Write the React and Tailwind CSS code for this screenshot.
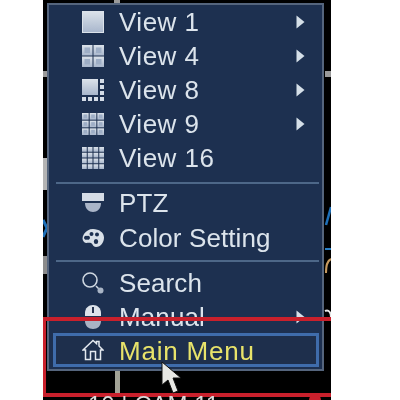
import React from 'react';

const Arrow = () => (
  <svg width="9" height="14" viewBox="0 0 9 14" className="ml-auto mr-[17px] shrink-0">
    <path d="M0.5 0.5 L8.5 7 L0.5 13.5 Z" fill="#d5dfe8" />
  </svg>
);

const Grid = ({ cols, rows, inset }) => {
  const cells = [];
  const w = (22 - (cols - 1)) / cols;
  const h = (22 - (rows - 1)) / rows;
  for (let r = 0; r < rows; r++) {
    for (let c = 0; c < cols; c++) {
      const x = c * (w + 1);
      const y = r * (h + 1);
      cells.push(<rect key={`${r}-${c}`} x={x} y={y} width={w} height={h} fill="url(#tile)" />);
      if (inset) {
        cells.push(<rect key={`i${r}-${c}`} x={x + inset} y={y + inset} width={w - inset * 2} height={h - inset * 2} fill="#9eaec6" />);
      }
    }
  }
  return cells;
};

const Tile = ({ children }) => (
  <svg width="22" height="22" viewBox="0 0 22 22">
    <defs>
      <linearGradient id="tile" x1="0" y1="0" x2="0" y2="1">
        <stop offset="0" stopColor="#dbe2ea" />
        <stop offset="1" stopColor="#a8b6cc" />
      </linearGradient>
    </defs>
    {children}
  </svg>
);

const icons = {
  view1: <Tile><rect x="0.5" y="0.5" width="21" height="21" fill="url(#tile)" stroke="#dbe2ea" /></Tile>,
  view4: <Tile><Grid cols={2} rows={2} inset={2.5} /></Tile>,
  view8: (
    <Tile>
      <rect x="0" y="0" width="16" height="16" fill="url(#tile)" />
      <rect x="18" y="0" width="4" height="4" fill="#d3dbe6" />
      <rect x="18" y="6" width="4" height="4" fill="#d3dbe6" />
      <rect x="18" y="12" width="4" height="4" fill="#d3dbe6" />
      <rect x="0" y="18" width="4" height="4" fill="#d3dbe6" />
      <rect x="6" y="18" width="4" height="4" fill="#d3dbe6" />
      <rect x="12" y="18" width="4" height="4" fill="#d3dbe6" />
      <rect x="18" y="18" width="4" height="4" fill="#d3dbe6" />
    </Tile>
  ),
  view9: <Tile><Grid cols={3} rows={3} inset={1.5} /></Tile>,
  view16: <Tile><Grid cols={4} rows={4} /></Tile>,
  ptz: (
    <svg width="22" height="20" viewBox="0 0 22 20">
      <rect x="0" y="0" width="22" height="8" fill="#d5dce6" />
      <path d="M3 10 H19 C19 16 15 19 11 19 C7 19 3 16 3 10 Z" fill="#aab5c8" />
    </svg>
  ),
  color: (
    <svg width="22" height="20" viewBox="0 0 22 20">
      <path fillRule="evenodd" fill="#d9e0e8" d="M11 1 C17 1 22 4.5 22 9.5 C22 14 19 19 14 19 C11 19 11 16 9 15 C6 14 4 16 2 14 C0 12 0 9 2 6 C4 3 7 1 11 1 Z M5 8 A2 2 0 1 0 5 11.5 A2 2 0 1 0 5 8 Z M9.5 4 A2 2 0 1 0 9.5 8 A2 2 0 1 0 9.5 4 Z M15 4.5 A2 2 0 1 0 15 8.5 A2 2 0 1 0 15 4.5 Z M14 11 A2.2 2.5 0 1 0 14 16 A2.2 2.5 0 1 0 14 11 Z" />
    </svg>
  ),
  search: (
    <svg width="24" height="24" viewBox="0 0 24 24">
      <circle cx="9" cy="9" r="7" fill="none" stroke="#cdd6e0" strokeWidth="1.6" />
      <path d="M15 15 L18 18" stroke="#cdd6e0" strokeWidth="1.5" />
      <circle cx="19.5" cy="19.5" r="3" fill="#a9b5c6" />
    </svg>
  ),
  manual: (
    <svg width="16" height="24" viewBox="0 0 16 24">
      <path d="M8 0 C12.5 0 16 3 16 8 V11 H0 V8 C0 3 3.5 0 8 0 Z" fill="#dde3ea" />
      <rect x="7" y="2" width="2" height="6" fill="#26344f" />
      <path d="M0 13 H16 V16 C16 21 12.5 24 8 24 C3.5 24 0 21 0 16 Z" fill="#a9b3c5" />
    </svg>
  ),
  home: (
    <svg width="22" height="22" viewBox="0 0 22 22" fill="none" stroke="#e4e9ef" strokeWidth="1.5">
      <path d="M1 11 L11 1.5 L14.5 4.5 V2.5 H17 V7 L21 11 L18.5 11 V20.5 H13.5 V12.5 H8.5 V20.5 H3.5 V11 Z" />
    </svg>
  ),
};

const Row = ({ icon, label, arrow, wide }) => (
  <div className="flex h-[34px] items-center">
    <div className="flex w-[70px] shrink-0 pl-[32px]">
      <div className="flex h-[24px] w-[24px] items-center justify-center">{icons[icon]}</div>
    </div>
    <span className={wide ? 'text-[26px] leading-none tracking-[0.5px] text-[#dce4ec]' : 'text-[26px] leading-none tracking-[0.1px] text-[#dce4ec]'}>{label}</span>
    {arrow && <Arrow />}
  </div>
);

const Divider = () => <div className="ml-[7px] mr-[3px] h-[2px] bg-[#4d6788]" />;

// bits of the live view that show around the menu
const VideoBackdrop = () => (
  <svg width="288" height="400" viewBox="0 0 288 400" className="absolute inset-0">
    <rect x="0" y="71" width="4" height="6" fill="#9a9a9a" />
    <rect x="0" y="158" width="4" height="32" fill="#b4b4b4" />
    <path d="M0 220 L4 228 L0 237" fill="none" stroke="#1d6fb8" strokeWidth="3" />
    <rect x="0" y="256" width="4" height="18" fill="#8b8b8b" />
    <rect x="282" y="71" width="6" height="6" fill="#9a9a9a" />
    <path d="M283 225 L288 207" stroke="#1d6fb8" strokeWidth="2.5" />
    <rect x="282" y="248" width="6" height="2" fill="#2a7fc4" />
    <path d="M283 273 C283 265 284 261 288 259" fill="none" stroke="#c79a5f" strokeWidth="2" />
    <path d="M282 311 C286 309 288 313 288 317" fill="none" stroke="#e8e8e8" strokeWidth="2" />
    <rect x="71" y="0" width="6" height="3" fill="#9a9a9a" />
    <rect x="72" y="371" width="5" height="22" fill="#a3a396" />
  </svg>
);

export default function App() {
  return (
    <div className="flex h-[400px] w-[400px] overflow-hidden bg-white font-['Liberation_Sans',Arial,sans-serif]">
      <div className="relative ml-[43px] h-[400px] w-[288px] overflow-hidden bg-black blur-[0.4px]">
        <VideoBackdrop />

        <div className="relative ml-[4px] mt-[3px] h-[368px] w-[277px] border-2 border-[#55657d] bg-[#1d3050]">
          <Row icon="view1" label="View 1" arrow wide />
          <Row icon="view4" label="View 4" arrow wide />
          <Row icon="view8" label="View 8" arrow wide />
          <Row icon="view9" label="View 9" arrow wide />
          <Row icon="view16" label="View 16" wide />
          <div className="mt-[7px]"><Divider /></div>
          <div className="mt-[2px]"><Row icon="ptz" label="PTZ" /></div>
          <div className="mt-[1px]"><Row icon="color" label="Color Setting" /></div>
          <div className="mt-[5px]"><Divider /></div>
          <div className="mt-[4px]"><Row icon="search" label="Search" /></div>
          <Row icon="manual" label="Manual" arrow />
          <div className="ml-[4px] mt-[-1px] flex h-[34px] w-[266px] items-center border-[3px] border-[#3f6cab] bg-[#1e2f4c]">
            <div className="flex w-[63px] shrink-0 pl-[25px]">
              <div className="flex h-[24px] w-[24px] items-center justify-center">{icons.home}</div>
            </div>
            <span className="pt-[2px] text-[26px] leading-none tracking-[0.8px] text-[#e8e36a]">Main Menu</span>
          </div>
        </div>

        {/* red annotation box */}
        <div className="pointer-events-none absolute left-0 top-[317px] h-[80px] w-[288px] border-y-[4px] border-l-[3px] border-[#c9202c]" />
        {/* mouse pointer */}
        <svg width="24" height="36" viewBox="0 0 24 36" className="absolute left-[117px] top-[361px]">
          <path d="M2 1 L2 24 L8 19 L13 32 L18 30 L13 17 L21 17 Z" fill="#e8e8e4" stroke="#111" strokeWidth="1" />
        </svg>
        {/* channel title, cut by the crop in the screenshot */}
        <div className="absolute left-[45px] top-[393px] flex w-[243px] items-start justify-between pr-[10px]">
          <span className="text-[24px] leading-none text-[#d8d8d8]">10 | CAM 11</span>
          <span className="mt-[1px] h-[12px] w-[12px] rounded-full bg-[#c9202c]" />
        </div>
      </div>
    </div>
  );
}
